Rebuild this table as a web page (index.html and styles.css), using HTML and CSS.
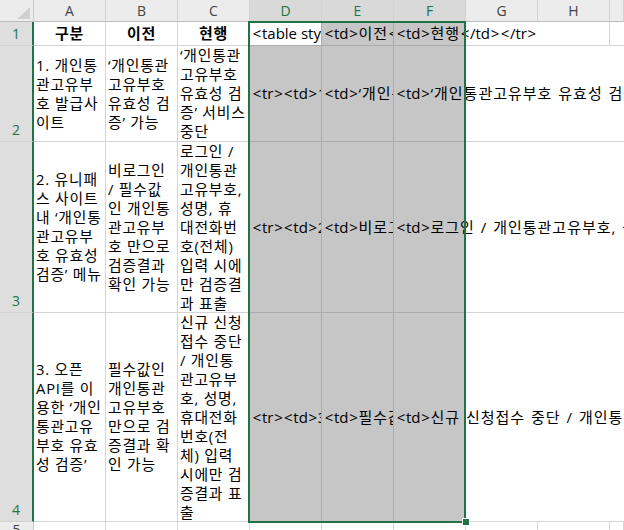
FILE: index.html
```html
<!DOCTYPE html>
<html lang="ko">
<head>
<meta charset="utf-8">
<title>Sheet</title>
<link rel="stylesheet" href="styles.css">
</head>
<body>
<div class="sheet">
  <div class="corner"><svg class="tri" width="33" height="21" viewBox="0 0 33 21"><polygon points="30,7 30,19 17,19"/></svg></div>
  <div class="ch">A</div>
  <div class="ch">B</div>
  <div class="ch">C</div>
  <div class="ch sel">D</div>
  <div class="ch sel">E</div>
  <div class="ch sel">F</div>
  <div class="ch">G</div>
  <div class="ch">H</div>
  <div class="ch"></div>

  <div class="rh sel">1</div>
  <div class="c hd">구분</div>
  <div class="c hd">이전</div>
  <div class="c hd">현행</div>
  <div class="c code active"><i class="b">&lt;</i>table style="border-collapse:collapse;"<i class="b">&gt;</i></div>
  <div class="c code gray"><i class="b">&lt;</i>td<i class="b">&gt;</i><span class="k">이전</span><i class="b">&lt;</i>/td<i class="b">&gt;</i></div>
  <div class="c code gray spill"><span><i class="b">&lt;</i>td<i class="b">&gt;</i><span class="k">현행</span><i class="b">&lt;</i>/td<i class="b">&gt;</i><i class="b">&lt;</i>/tr<i class="b">&gt;</i></span></div>
  <div class="c open"></div>
  <div class="c"></div>
  <div class="c open"></div>

  <div class="rh sel">2</div>
  <div class="c t"><div>1. 개인통<br>관고유부<br>호 발급사<br>이트</div></div>
  <div class="c t"><div>‘개인통관<br>고유부호<br>유효성 검<br>증’ 가능</div></div>
  <div class="c t"><div>‘개인통관<br>고유부호<br>유효성 검<br>증’ 서비스<br>중단</div></div>
  <div class="c code gray"><i class="b">&lt;</i>tr<i class="b">&gt;</i><i class="b">&lt;</i>td<i class="b">&gt;</i><span class="k">1. 개인통관고유부호 발급사이트</span><i class="b">&lt;</i>/td<i class="b">&gt;</i></div>
  <div class="c code gray"><i class="b">&lt;</i>td<i class="b">&gt;</i><span class="k">‘개인통관고유부호 유효성 검증’ 가능</span><i class="b">&lt;</i>/td<i class="b">&gt;</i></div>
  <div class="c code gray spill"><span><i class="b">&lt;</i>td<i class="b">&gt;</i><span class="k">‘개인통관고유부호 유효성 검증’ 서비스 중단</span><i class="b">&lt;</i>/td<i class="b">&gt;</i><i class="b">&lt;</i>/tr<i class="b">&gt;</i></span></div>
  <div class="c open"></div>
  <div class="c open"></div>
  <div class="c open"></div>

  <div class="rh sel">3</div>
  <div class="c t"><div>2. 유니패<br>스 사이트<br>내 ‘개인통<br>관고유부<br>호 유효성<br>검증’ 메뉴</div></div>
  <div class="c t"><div>비로그인<br>/ 필수값<br>인 개인통<br>관고유부<br>호 만으로<br>검증결과<br>확인 가능</div></div>
  <div class="c t"><div>로그인 /<br>개인통관<br>고유부호,<br>성명, 휴<br>대전화번<br>호(전체)<br>입력 시에<br>만 검증결<br>과 표출</div></div>
  <div class="c code gray"><i class="b">&lt;</i>tr<i class="b">&gt;</i><i class="b">&lt;</i>td<i class="b">&gt;</i><span class="k">2. 유니패스 사이트 내 ‘개인통관고유부호 유효성 검증’ 메뉴</span><i class="b">&lt;</i>/td<i class="b">&gt;</i></div>
  <div class="c code gray"><i class="b">&lt;</i>td<i class="b">&gt;</i><span class="k">비로그인 / 필수값인 개인통관고유부호 만으로 검증결과 확인 가능</span><i class="b">&lt;</i>/td<i class="b">&gt;</i></div>
  <div class="c code gray spill"><span><i class="b">&lt;</i>td<i class="b">&gt;</i><span class="k">로그인 / 개인통관고유부호, 성명, 휴대전화번호(전체) 입력 시에만 검증결과 표출</span><i class="b">&lt;</i>/td<i class="b">&gt;</i><i class="b">&lt;</i>/tr<i class="b">&gt;</i></span></div>
  <div class="c open"></div>
  <div class="c open"></div>
  <div class="c open"></div>

  <div class="rh sel">4</div>
  <div class="c t"><div>3. 오픈<br>API를 이<br>용한 ‘개인<br>통관고유<br>부호 유효<br>성 검증’</div></div>
  <div class="c t"><div>필수값인<br>개인통관<br>고유부호<br>만으로 검<br>증결과 확<br>인 가능</div></div>
  <div class="c t"><div>신규 신청<br>접수 중단<br>/ 개인통<br>관고유부<br>호, 성명,<br>휴대전화<br>번호(전<br>체) 입력<br>시에만 검<br>증결과 표<br>출</div></div>
  <div class="c code gray"><i class="b">&lt;</i>tr<i class="b">&gt;</i><i class="b">&lt;</i>td<i class="b">&gt;</i><span class="k">3. 오픈 API를 이용한 ‘개인통관고유부호 유효성 검증’</span><i class="b">&lt;</i>/td<i class="b">&gt;</i></div>
  <div class="c code gray"><i class="b">&lt;</i>td<i class="b">&gt;</i><span class="k">필수값인 개인통관고유부호 만으로 검증결과 확인 가능</span><i class="b">&lt;</i>/td<i class="b">&gt;</i></div>
  <div class="c code gray spill"><span><i class="b">&lt;</i>td<i class="b">&gt;</i><span class="k">신규 신청접수 중단 / 개인통관고유부호, 성명, 휴대전화번호(전체) 입력 시에만 검증결과 표출</span><i class="b">&lt;</i>/td<i class="b">&gt;</i><i class="b">&lt;</i>/tr<i class="b">&gt;</i></span></div>
  <div class="c open"></div>
  <div class="c open"></div>
  <div class="c open"></div>

  <div class="rh">5</div>
  <div class="c"></div>
  <div class="c"></div>
  <div class="c"></div>
  <div class="c"></div>
  <div class="c"></div>
  <div class="c"></div>
  <div class="c"></div>
  <div class="c"></div>
  <div class="c"></div>

  <div class="selbox"><div class="handle"></div></div>
</div>
</body>
</html>
```

FILE: styles.css
```css
* {
  box-sizing: border-box;
  margin: 0;
  padding: 0;
}

html, body {
  width: 624px;
  height: 530px;
  overflow: hidden;
  background: #ffffff;
}

body {
  font-family: "Open Sans", "Noto Sans CJK KR", sans-serif;
  font-size: 15px;
  color: #000000;
}

.sheet {
  position: relative;
  display: grid;
  grid-template-columns: 34px repeat(8, 72px) 14px;
  grid-template-rows: 22px 24px 96px 171px 209px 20px;
  width: 624px;
  height: 530px;
  overflow: hidden;
}

.corner {
  background: #ececec;
  border-right: 1px solid #c8c8c8;
  border-bottom: 1px solid #bcbcbc;
}

.tri {
  display: block;
  fill: #d0d0d0;
}

.ch {
  background: #ececec;
  border-right: 1px solid #d2d2d2;
  border-bottom: 1px solid #bcbcbc;
  display: flex;
  align-items: center;
  justify-content: center;
  color: #444444;
  font-size: 14px;
  line-height: 19px;
  overflow: hidden;
}

.ch.sel {
  background: #d9d9d9;
  color: #217346;
}

.rh {
  background: #ececec;
  border-right: 1px solid #c8c8c8;
  border-bottom: 1px solid #d2d2d2;
  display: flex;
  align-items: flex-end;
  justify-content: center;
  padding-bottom: 2px;
  color: #444444;
  font-size: 14px;
  line-height: 19px;
  overflow: hidden;
}

.rh.sel {
  background: #dedede;
  border-right: 2px solid #217346;
  color: #217346;
}

.c {
  border-right: 1px solid #d4d4d4;
  border-bottom: 1px solid #d4d4d4;
  display: flex;
  align-items: center;
  padding: 0 2px;
  white-space: nowrap;
  line-height: 19px;
  min-width: 0;
}

.hd {
  justify-content: center;
  font-weight: bold;
  letter-spacing: 0.8px;
}

.t {
  overflow: visible;
  font-size: 14.8px;
  letter-spacing: 0.8px;
}

.code {
  overflow: hidden;
}

.b {
  font-style: normal;
  padding: 0 0.7px;
}

.k {
  letter-spacing: 1px;
  word-spacing: 1px;
}

.gray {
  background: #c6c6c6;
  border-right-color: #ababab;
  border-bottom-color: #ababab;
}

.active {
  background: #ffffff;
  border-bottom-color: #ababab;
  border-right-color: #ababab;
}

.spill {
  overflow: visible;
}

.spill > span {
  flex: none;
}

.open {
  background: transparent;
  border-right: none;
}

.selbox {
  position: absolute;
  grid-column: 5 / 8;
  grid-row: 2 / 6;
  top: -1px;
  bottom: -1px;
  left: -2px;
  right: 0;
  border: 2px solid #217346;
  pointer-events: none;
}

.handle {
  position: absolute;
  right: -6px;
  bottom: -5px;
  width: 8px;
  height: 8px;
  background: #217346;
  border: 1px solid #ffffff;
}
```
